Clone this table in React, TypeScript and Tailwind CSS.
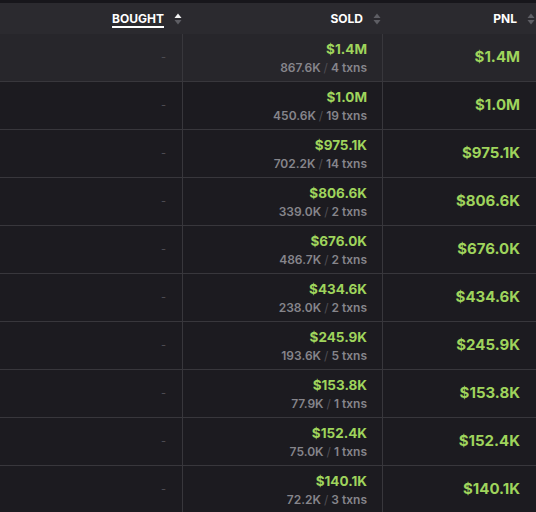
import React from "react";

type Row = { sold: string; amt: string; txns: number; pnl: string };

const rows: Row[] = [
  { sold: "$1.4M", amt: "867.6K", txns: 4, pnl: "$1.4M" },
  { sold: "$1.0M", amt: "450.6K", txns: 19, pnl: "$1.0M" },
  { sold: "$975.1K", amt: "702.2K", txns: 14, pnl: "$975.1K" },
  { sold: "$806.6K", amt: "339.0K", txns: 2, pnl: "$806.6K" },
  { sold: "$676.0K", amt: "486.7K", txns: 2, pnl: "$676.0K" },
  { sold: "$434.6K", amt: "238.0K", txns: 2, pnl: "$434.6K" },
  { sold: "$245.9K", amt: "193.6K", txns: 5, pnl: "$245.9K" },
  { sold: "$153.8K", amt: "77.9K", txns: 1, pnl: "$153.8K" },
  { sold: "$152.4K", amt: "75.0K", txns: 1, pnl: "$152.4K" },
  { sold: "$140.1K", amt: "72.2K", txns: 3, pnl: "$140.1K" },
];

function SortIcon({ active }: { active?: boolean }) {
  return (
    <svg width="8" height="12" viewBox="0 0 8 12" className="shrink-0">
      <path d="M4 0.5 L7.5 5 L0.5 5 Z" fill={active ? "#f2f2f2" : "#5e5e64"} />
      <path d="M4 11.5 L7.5 7 L0.5 7 Z" fill="#5e5e64" />
    </svg>
  );
}

export default function App() {
  return (
    <div
      className="w-[536px] h-[512px] overflow-hidden bg-[#1c1b20] flex flex-col"
      style={{ fontFamily: "Inter, 'Noto Sans', sans-serif" }}
    >
      <div className="h-[3px] bg-[#17161b] shrink-0" />
      <div className="h-[31px] bg-[#2b2a2f] flex shrink-0 text-[12px] font-bold text-white">
        <div className="w-[183px] flex items-center justify-end gap-[10px] pr-[1px]">
          <span className="underline underline-offset-[3px] decoration-[1.5px]">BOUGHT</span>
          <SortIcon active />
        </div>
        <div className="w-[200px] flex items-center justify-end gap-[10px] pr-[2px]">
          <span>SOLD</span>
          <SortIcon />
        </div>
        <div className="flex-1 flex items-center justify-end gap-[10px] pr-[1px]">
          <span>PNL</span>
          <SortIcon />
        </div>
      </div>
      {rows.map((r, i) => (
        <div
          key={i}
          className={`h-[48px] shrink-0 flex border-b border-[#38373c] ${i === 0 ? "bg-[#27262b]" : "bg-[#1c1b20]"}`}
        >
          <div className="w-[183px] border-r border-[#38373c] flex items-center justify-end pr-[16px] text-[11px] text-[#4f4e54]">
            -
          </div>
          <div className="w-[200px] border-r border-[#38373c] flex flex-col items-end justify-center pr-[15px] gap-[2px]">
            <div className="text-[13.5px] font-bold text-[#9fd45c] leading-[18px]">{r.sold}</div>
            <div className="text-[12px] font-semibold text-[#86858b] leading-[16px]">
              {r.amt} <span className="text-[#4e4d53] font-normal">/</span> {r.txns} txns
            </div>
          </div>
          <div className="flex-1 flex items-center justify-end pr-[16px] text-[15px] font-bold text-[#9fd45c]">
            {r.pnl}
          </div>
        </div>
      ))}
    </div>
  );
}
